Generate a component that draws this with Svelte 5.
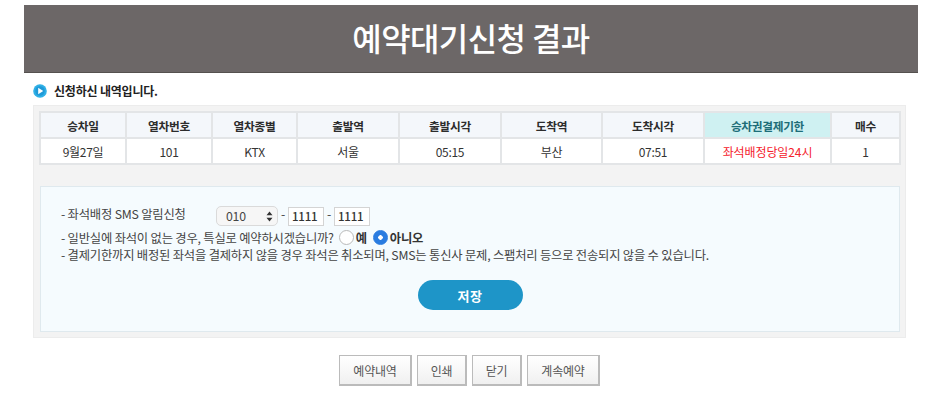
<script>
  const columns = [
    { head: '승차일', value: '9월27일', width: 86 },
    { head: '열차번호', value: '101', width: 86 },
    { head: '열차종별', value: 'KTX', width: 85 },
    { head: '출발역', value: '서울', width: 102 },
    { head: '출발시각', value: '05:15', width: 102 },
    { head: '도착역', value: '부산', width: 101 },
    { head: '도착시각', value: '07:51', width: 102 },
    { head: '승차권결제기한', value: '좌석배정당일24시', width: 127, accent: true },
    { head: '매수', value: '1', width: 69 }
  ];
  const actions = [
    { label: '예약내역', width: 73 },
    { label: '인쇄', width: 50 },
    { label: '닫기', width: 50 },
    { label: '계속예약', width: 73 }
  ];
</script>

<main class="page">
  <header class="banner"><h1>예약대기신청 결과</h1></header>

  <p class="notice">
    <svg width="14" height="14" viewBox="0 0 14 14" aria-hidden="true">
      <circle cx="7" cy="7" r="6.8" fill="#2fb0e6" />
      <circle cx="7" cy="7" r="4.8" fill="#1f9ad8" />
      <path d="M5.2 3.8 L10.2 7 L5.2 10.2 Z" fill="#fff" />
    </svg>
    신청하신 내역입니다.
  </p>

  <section class="panel">
    <table>
      <colgroup>
        {#each columns as col}
          <col style="width: {col.width}px" />
        {/each}
      </colgroup>
      <thead>
        <tr>
          {#each columns as col}
            <th class:accent={col.accent}>{col.head}</th>
          {/each}
        </tr>
      </thead>
      <tbody>
        <tr>
          {#each columns as col}
            <td class:accent={col.accent}>{col.value}</td>
          {/each}
        </tr>
      </tbody>
    </table>

    <div class="form">
      <div class="row sms">
        <span class="sms-label">- 좌석배정 SMS 알림신청</span>
        <span class="select">010
          <svg width="7" height="11" viewBox="0 0 7 11" aria-hidden="true">
            <path d="M3.5 0.5 L6.5 4.2 H0.5 Z M3.5 10.5 L0.5 6.8 H6.5 Z" fill="#333" />
          </svg>
        </span>
        <span class="dash">-</span>
        <span class="field">1111</span>
        <span class="dash">-</span>
        <span class="field">1111</span>
      </div>
      <div class="row seat">
        <span>- 일반실에 좌석이 없는 경우, 특실로 예약하시겠습니까?</span>
        <span class="radio"></span><b class="first">예</b>
        <span class="radio on"></span><b>아니오</b>
      </div>
      <div class="row">- 결제기한까지 배정된 좌석을 결제하지 않을 경우 좌석은 취소되며, SMS는 통신사 문제, 스팸처리 등으로 전송되지 않을 수 있습니다.</div>
      <div class="save-wrap"><button class="save">저장</button></div>
    </div>
  </section>

  <nav class="actions">
    {#each actions as action}
      <button style="width: {action.width}px">{action.label}</button>
    {/each}
  </nav>
</main>

<style>
  :global(body) {
    margin: 0;
    background: #fff;
    font-family: "Noto Sans CJK KR", "Noto Sans", sans-serif;
    color: #333;
  }

  .page {
    width: 938px;
    height: 406px;
    padding: 5px 20px 0 24px;
    box-sizing: border-box;
    overflow: hidden;
  }

  .banner {
    height: 68px;
    padding-bottom: 4px;
    background: #6c6767;
    border-bottom: 1px solid #55514f;
    box-sizing: border-box;
    display: flex;
    align-items: center;
    justify-content: center;
  }

  h1 {
    margin: 0;
    font-size: 32px;
    font-weight: 500;
    letter-spacing: -0.6px;
    color: #fff;
    line-height: 1;
  }

  .notice {
    margin: 9px 0 6px 9px;
    height: 17px;
    display: flex;
    align-items: center;
    gap: 7px;
    font-size: 12px;
    font-weight: 700;
    letter-spacing: -0.2px;
    color: #222;
  }

  .panel {
    width: 873px;
    height: 233px;
    margin-left: 9px;
    padding: 5px 6px 0 5px;
    box-sizing: border-box;
    background: #f3f3f3;
    border: 1px solid #ececec;
  }

  table {
    width: 860px;
    table-layout: fixed;
    border-collapse: collapse;
    background: #fff;
    font-size: 12px;
  }

  th,
  td {
    border: 2px solid #e3e5e7;
    padding: 0;
    text-align: center;
    letter-spacing: -0.3px;
  }

  th {
    height: 24px;
    background: #f4f7fb;
    font-size: 11.7px;
    font-weight: 700;
    color: #2c2c2c;
  }

  td {
    height: 24px;
    color: #333;
  }

  th.accent {
    background: #cff1f2;
    color: #1d6d78;
  }

  td.accent {
    letter-spacing: -0.1px;
    color: #f5222d;
  }

  .form {
    width: 860px;
    height: 146px;
    margin: 21px 0 0 1px;
    padding: 18px 20px 0;
    box-sizing: border-box;
    background: #f5fbfe;
    border: 1px solid #dfe9ee;
    font-size: 12.3px;
    letter-spacing: -0.2px;
    color: #444;
  }

  .row {
    display: flex;
    align-items: center;
    height: 17px;
    white-space: nowrap;
  }

  .sms {
    height: 22px;
    margin-bottom: 2px;
  }

  .sms-label {
    width: 155px;
    margin-top: -4px;
  }

  .select {
    width: 62px;
    height: 20px;
    padding: 0 4px 0 9px;
    box-sizing: border-box;
    display: flex;
    align-items: center;
    justify-content: space-between;
    background: #f6f6f6;
    border: 1px solid #dadada;
    border-radius: 5px;
  }

  .dash {
    width: 10px;
    text-align: center;
    margin-top: -4px;
  }

  .field {
    width: 36px;
    height: 19px;
    box-sizing: border-box;
    display: flex;
    align-items: center;
    padding-left: 3px;
    background: #fff;
    border: 1px solid #d4d4d4;
    color: #333;
    font-size: 11.5px;
    font-weight: 500;
  }

  .seat b {
    font-weight: 700;
    color: #333;
  }

  .radio {
    width: 15px;
    height: 15px;
    margin: 0 2px 0 5px;
    box-sizing: border-box;
    background: #fff;
    border: 1px solid #b9b9b9;
    border-radius: 50%;
  }

  .radio.on {
    margin-left: 6px;
    background: radial-gradient(circle, #fff 0 2px, #2a7ce0 2.5px);
    border-color: #2a7ce0;
  }

  .save-wrap {
    display: flex;
    justify-content: center;
    margin-top: 17px;
  }

  .save {
    width: 105px;
    height: 30px;
    padding: 0;
    border: 0;
    border-radius: 15px;
    background: #1e95c8;
    color: #fff;
    font: 700 13px "Noto Sans CJK KR", sans-serif;
    letter-spacing: 0.5px;
  }

  .actions {
    display: flex;
    justify-content: center;
    gap: 5px;
    margin: 17px 0 0 -3px;
  }

  .actions button {
    height: 31px;
    padding: 0;
    box-sizing: border-box;
    background: linear-gradient(#fff, #f0f0f0);
    border: 1px solid #bbb;
    border-bottom-width: 2px;
    border-right-width: 2px;
    color: #555;
    font: 400 12px "Noto Sans CJK KR", sans-serif;
    letter-spacing: -0.2px;
  }
</style>
